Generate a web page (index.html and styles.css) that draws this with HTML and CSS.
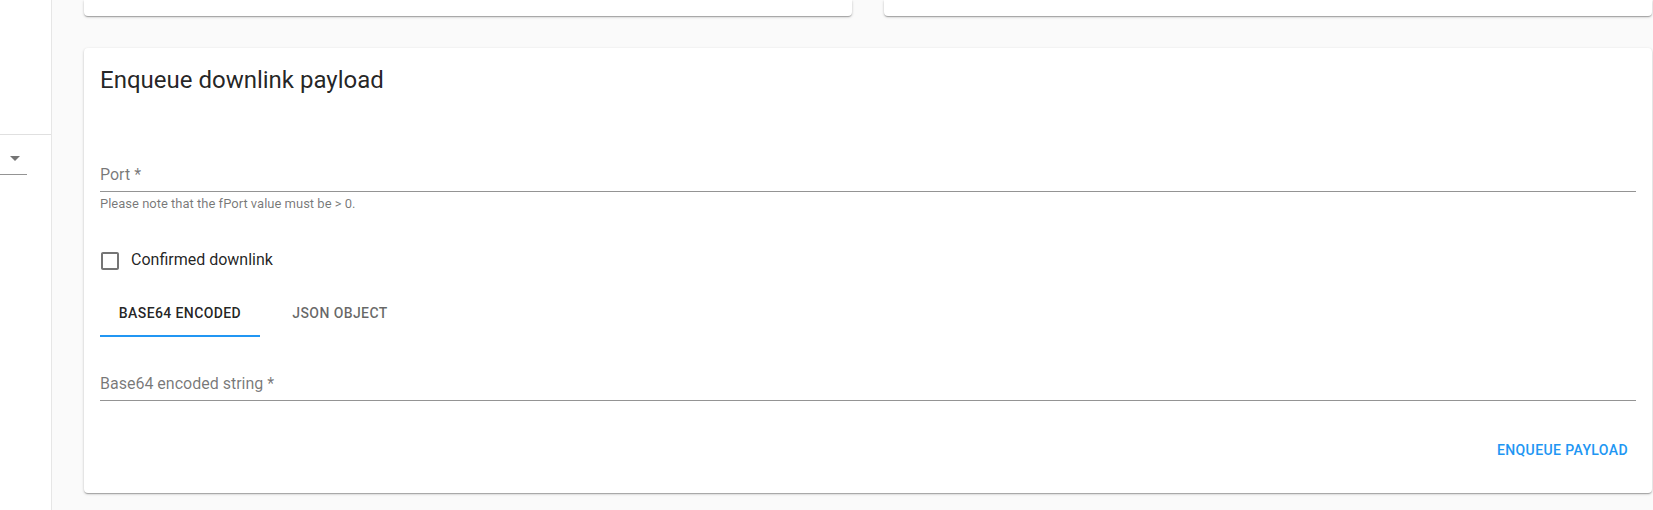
FILE: index.html
```html
<!DOCTYPE html>
<html lang="en">
<head>
<meta charset="utf-8">
<title>Enqueue downlink payload</title>
<link rel="stylesheet" href="styles.css">
</head>
<body>
<div class="app">
  <aside class="sidebar">
    <div class="sb-top"></div>
    <div class="sb-select">
      <svg class="sb-arrow" width="10" height="5" viewBox="0 0 10 5"><path d="M0 0h10L5 5z" fill="#757575"/></svg>
    </div>
  </aside>
  <main class="main">
    <div class="grid">
      <div class="card card-stub"></div>
      <div class="card card-stub"></div>
      <section class="card card-wide">
        <div class="card-header">
          <h2 class="title">Enqueue downlink payload</h2>
        </div>
        <div class="card-content">
          <div class="field">
            <div class="input"><span class="label">Port *</span></div>
            <p class="helper">Please note that the fPort value must be &gt; 0.</p>
          </div>
          <label class="check-row">
            <span class="check-btn">
              <svg width="24" height="24" viewBox="0 0 24 24"><path fill="#757575" d="M19 5v14H5V5h14m0-2H5c-1.11 0-2 .9-2 2v14c0 1.1.89 2 2 2h14c1.1 0 2-.9 2-2V5c0-1.1-.9-2-2-2z"/></svg>
            </span>
            <span class="check-label">Confirmed downlink</span>
          </label>
          <div class="tabs">
            <div class="tab tab-active">Base64 encoded</div>
            <div class="tab">JSON object</div>
          </div>
          <div class="field">
            <div class="input"><span class="label">Base64 encoded string *</span></div>
          </div>
        </div>
        <div class="card-actions">
          <button class="btn-text" type="button">Enqueue payload</button>
        </div>
      </section>
    </div>
  </main>
</div>
</body>
</html>
```

FILE: styles.css
```css
* { box-sizing: border-box; }
html, body {
  margin: 0;
  padding: 0;
  height: 510px;
  overflow: hidden;
  background: #fafafa;
  font-family: Roboto, "Liberation Sans", Arial, sans-serif;
  color: rgba(0, 0, 0, 0.87);
}
.app {
  display: flex;
  height: 510px;
}
.sidebar {
  width: 52px;
  flex: 0 0 52px;
  background: #fff;
  border-right: 1px solid #e6e6e6;
}
.sb-top {
  height: 135px;
  border-bottom: 1px solid #e0e0e0;
}
.sb-select {
  width: 27px;
  height: 40px;
  border-bottom: 1px solid rgba(0, 0, 0, 0.42);
  display: flex;
  justify-content: flex-end;
  align-items: flex-end;
  padding: 0 7px 13px 0;
}
.sb-arrow { display: block; }
.main {
  flex: 1;
  padding: 0 1px 0 32px;
}
.grid {
  display: grid;
  grid-template-columns: 1fr 1fr;
  gap: 32px;
}
.card {
  background: #fff;
  border-radius: 4px;
  box-shadow: 0 1px 3px 0 rgba(0,0,0,0.2), 0 1px 1px 0 rgba(0,0,0,0.14), 0 2px 1px -1px rgba(0,0,0,0.12);
}
.card-stub {
  height: 16px;
  border-top-left-radius: 0;
  border-top-right-radius: 0;
}
.card-wide {
  grid-column: 1 / span 2;
}
.card-header {
  padding: 16px;
}
.title {
  margin: 0;
  font-size: 24px;
  line-height: 32px;
  font-weight: 400;
  color: rgba(0, 0, 0, 0.87);
}
.card-content {
  display: flex;
  flex-direction: column;
  padding: 16px 16px 0;
}
.field {
  margin-top: 16px;
  padding-top: 16px;
}
.input {
  height: 32px;
  padding-top: 5px;
  border-bottom: 1px solid rgba(0, 0, 0, 0.42);
}
.label {
  display: block;
  font-size: 16px;
  line-height: 19px;
  color: rgba(0, 0, 0, 0.54);
}
.helper {
  margin: 5px 0 0;
  font-size: 13px;
  line-height: 13px;
  color: rgba(0, 0, 0, 0.54);
}
.check-row {
  display: flex;
  align-items: center;
  margin: 30px 0 0 -11px;
  height: 42px;
}
.check-btn {
  display: flex;
  padding: 9px;
}
.check-label {
  font-size: 16px;
  line-height: 24px;
  margin-top: -2px;
  color: rgba(0, 0, 0, 0.87);
}
.tabs {
  display: flex;
  margin-top: 7px;
  height: 48px;
}
.tab {
  width: 160px;
  height: 48px;
  display: flex;
  align-items: center;
  justify-content: center;
  font-size: 14px;
  font-weight: 500;
  letter-spacing: 0.4px;
  text-transform: uppercase;
  color: rgba(0, 0, 0, 0.6);
  border-bottom: 2px solid transparent;
  padding-top: 2px;
}
.tab-active {
  color: rgba(0, 0, 0, 0.87);
  border-bottom-color: #2196f3;
}
.card-actions {
  display: flex;
  justify-content: flex-end;
  padding: 31px 16px 25px;
}
.btn-text {
  font-family: Roboto, "Liberation Sans", Arial, sans-serif;
  font-size: 14px;
  font-weight: 500;
  letter-spacing: 0.4px;
  text-transform: uppercase;
  line-height: 24px;
  padding: 6px 8px;
  border: 0;
  background: transparent;
  color: #2196f3;
  border-radius: 4px;
}
```
